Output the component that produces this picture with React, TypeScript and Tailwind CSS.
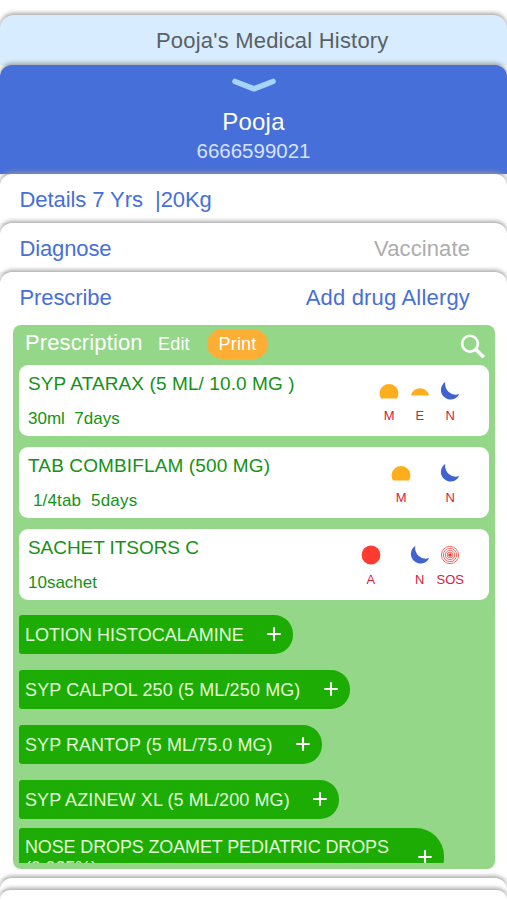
import React from "react";

const shadow = "shadow-[0_-2px_4px_rgba(150,150,150,0.85)]";

function Sun() {
  return (
    <svg width="20" height="20" viewBox="0 0 20 20">
      <path d="M2 17.4 A9.4 9.4 0 1 1 18 17.4 Z" fill="#fdae1c" />
    </svg>
  );
}

function Sunset() {
  return (
    <svg width="20" height="20" viewBox="0 0 20 20">
      <path d="M1 14.4 A9.2 9 0 0 1 19 14.4 Z" fill="#fdae1c" />
    </svg>
  );
}

function Moon() {
  return (
    <svg width="20" height="20" viewBox="0 0 20 20">
      <path d="M5.4 0.8 A9.6 9.6 0 1 0 19.2 13 A10.6 10.6 0 0 1 5.4 0.8 Z" fill="#4263cd" />
    </svg>
  );
}

function Noon() {
  return (
    <svg width="20" height="20" viewBox="0 0 20 20">
      <circle cx="10" cy="10" r="9.4" fill="#fd3b30" />
    </svg>
  );
}

function Sos() {
  return (
    <svg width="20" height="20" viewBox="0 0 20 20" fill="none" stroke="#ee5a54" strokeWidth="0.9">
      <circle cx="10" cy="10" r="8.6" />
      <circle cx="10" cy="10" r="6.6" />
      <circle cx="10" cy="10" r="4.7" />
      <circle cx="10" cy="10" r="2.9" />
      <circle cx="10" cy="10" r="1.8" fill="#ee3a34" stroke="none" />
    </svg>
  );
}

function Dose({ label, children }: { label: string; children?: React.ReactNode }) {
  return (
    <div className="flex w-[30.5px] flex-col items-center">
      <div className="h-5">{children}</div>
      <div className="mt-[6px] text-[13px] leading-[18px] text-[#d8203c]">{label}</div>
    </div>
  );
}

function Drug({ name, dose, nameCls, doseCls, children }: {
  name: string; dose: string; nameCls: string; doseCls: string; children: React.ReactNode;
}) {
  return (
    <div className="flex h-[71px] shrink-0 justify-between rounded-[9px] bg-white pl-[9px] pr-[23px] text-[#149214]">
      <div className="whitespace-pre">
        <div className={`mt-[7px] text-[19px] leading-6 ${nameCls}`}>{name}</div>
        <div className={`mt-[13px] text-[17px] leading-5 ${doseCls}`}>{dose}</div>
      </div>
      <div className="flex pt-[16px]">{children}</div>
    </div>
  );
}

function Plus() {
  return (
    <svg className="shrink-0" width="14" height="14" viewBox="0 0 14 14" stroke="white" strokeWidth="2.1">
      <path d="M7 0.3V13.7M0.3 7H13.7" />
    </svg>
  );
}

function Chip({ name, width, nameCls }: { name: string; width: string; nameCls: string }) {
  return (
    <div className={`flex h-[38.5px] shrink-0 items-center justify-between rounded-l-[3px] rounded-r-[19px] bg-[#1cac04] pl-[6px] pr-[12px] text-[#e2fbd8] ${width}`}>
      <span className={`whitespace-nowrap pt-[2px] text-[18px] leading-6 ${nameCls}`}>{name}</span>
      <Plus />
    </div>
  );
}

export default function App() {
  return (
    <div className="flex h-[900px] w-[507px] flex-col overflow-hidden bg-white pt-[15px] font-['Liberation_Sans',Arial,sans-serif]">
      <div className={`h-[50px] shrink-0 rounded-t-[14px] bg-[#d7edff] ${shadow}`}>
        <div className="whitespace-nowrap pl-[156px] pt-[12px] text-[22px] leading-7 tracking-[0.2px] text-[#596066]">Pooja's Medical History</div>
      </div>
      <div className={`flex h-[109px] shrink-0 flex-col items-center rounded-t-[12px] bg-[#476fd9] ${shadow}`}>
        <svg className="mt-[13px]" width="44" height="16" viewBox="0 0 44 16" fill="none" stroke="#a6d3f8" strokeWidth="5.6" strokeLinecap="round" strokeLinejoin="round">
          <path d="M3 3.5L22 10.8L41 3.5" />
        </svg>
        <div className="mt-[14px] text-[24px] leading-7 tracking-[0.2px] text-white">Pooja</div>
        <div className="mt-[1px] text-[20.5px] leading-7 text-[#d6e2fc]">6666599021</div>
      </div>
      <div className={`h-[49px] shrink-0 rounded-t-[12px] bg-white ${shadow}`}>
        <div className="whitespace-pre pl-[19.5px] pt-[12px] text-[22px] leading-7 tracking-[-0.07px] text-[#476fd9]">Details 7 Yrs  |20Kg</div>
      </div>
      <div className={`flex h-[49px] shrink-0 justify-between rounded-t-[12px] bg-white pl-[19.5px] pr-[37px] pt-[12px] text-[22px] leading-7 ${shadow}`}>
        <span className="tracking-[-0.13px] text-[#476fd9]">Diagnose</span>
        <span className="tracking-[0.1px] text-[#adadad]">Vaccinate</span>
      </div>
      <div className={`flex h-[606px] shrink-0 flex-col rounded-t-[12px] bg-white ${shadow}`}>
        <div className="flex h-[52.5px] shrink-0 justify-between pl-[19.5px] pr-[37px] pt-[12px] text-[22px] leading-7 text-[#476fd9]">
          <span className="tracking-[-0.1px]">Prescribe</span>
          <span className="tracking-[0.18px]">Add drug Allergy</span>
        </div>
        <div className="ml-[13px] flex h-[544.5px] w-[481.5px] flex-col rounded-[8px] bg-[#94d789] pl-[6px] pr-[6px]">
          <div className="flex h-[40.5px] shrink-0 items-start whitespace-nowrap text-white">
            <span className="ml-[6px] mt-[4.5px] w-[117px] text-[22px] leading-7 tracking-[0.12px]">Prescription</span>
            <span className="ml-[16px] mt-[7px] w-[32px] text-[18px] leading-6 tracking-[0.2px]">Edit</span>
            <span className="ml-[17px] mt-[4px] flex h-[30px] w-[61px] items-center justify-center rounded-[15px] bg-[#fdae34] pt-[1px] text-[18px] tracking-[0.2px]">Print</span>
            <svg className="ml-[192px] mt-[9px]" width="26" height="26" viewBox="0 0 26 26" fill="none" stroke="white">
              <circle cx="10" cy="9.7" r="7.9" strokeWidth="2.6" />
              <path d="M15.6 15.3L23.8 23.2" strokeWidth="3.6" />
            </svg>
          </div>
          <div className="flex h-[498px] shrink-0 flex-col overflow-hidden">
            <div className="flex shrink-0 flex-col gap-[11px]">
              <Drug name="SYP ATARAX (5 ML/ 10.0 MG )" nameCls="tracking-[0.1px]" dose="30ml  7days" doseCls="">
                <Dose label="M"><Sun /></Dose>
                <Dose label="E"><Sunset /></Dose>
                <Dose label="N"><Moon /></Dose>
              </Drug>
              <Drug name="TAB COMBIFLAM (500 MG)" nameCls="tracking-[0.13px]" dose=" 1/4tab  5days" doseCls="tracking-[0.18px]">
                <Dose label="M"><Sun /></Dose>
                <div className="w-[18.5px]" />
                <Dose label="N"><Moon /></Dose>
              </Drug>
              <Drug name="SACHET ITSORS C" nameCls="tracking-[-0.06px]" dose="10sachet" doseCls="">
                <Dose label="A"><Noon /></Dose>
                <div className="w-[18.5px]" />
                <Dose label="N"><Moon /></Dose>
                <Dose label="SOS"><Sos /></Dose>
              </Drug>
            </div>
            <div className="mt-[15px] flex shrink-0 flex-col gap-[16.5px]">
              <Chip name="LOTION HISTOCALAMINE" nameCls="" width="w-[274px]" />
              <Chip name="SYP CALPOL 250 (5 ML/250 MG)" nameCls="tracking-[0.12px]" width="w-[331px]" />
              <Chip name="SYP RANTOP (5 ML/75.0 MG)" nameCls="tracking-[0.06px]" width="w-[303px]" />
              <Chip name="SYP AZINEW XL (5 ML/200 MG)" nameCls="tracking-[0.1px]" width="w-[320px]" />
            </div>
            <div className="mt-[9px] flex h-[58px] w-[424.5px] shrink-0 items-center justify-between rounded-l-[3px] rounded-r-[28px] bg-[#1cac04] pl-[6px] pr-[12px] text-[#e2fbd8]">
              <div className="w-[380px] pt-[2px] text-[18px] leading-[21px] tracking-[-0.14px]">NOSE DROPS ZOAMET PEDIATRIC DROPS (0.025%)</div>
              <Plus />
            </div>
          </div>
        </div>
      </div>
      <div className={`h-[12px] shrink-0 rounded-t-[12px] bg-white ${shadow}`} />
      <div className={`h-[10px] shrink-0 rounded-t-[12px] bg-white ${shadow}`} />
    </div>
  );
}
